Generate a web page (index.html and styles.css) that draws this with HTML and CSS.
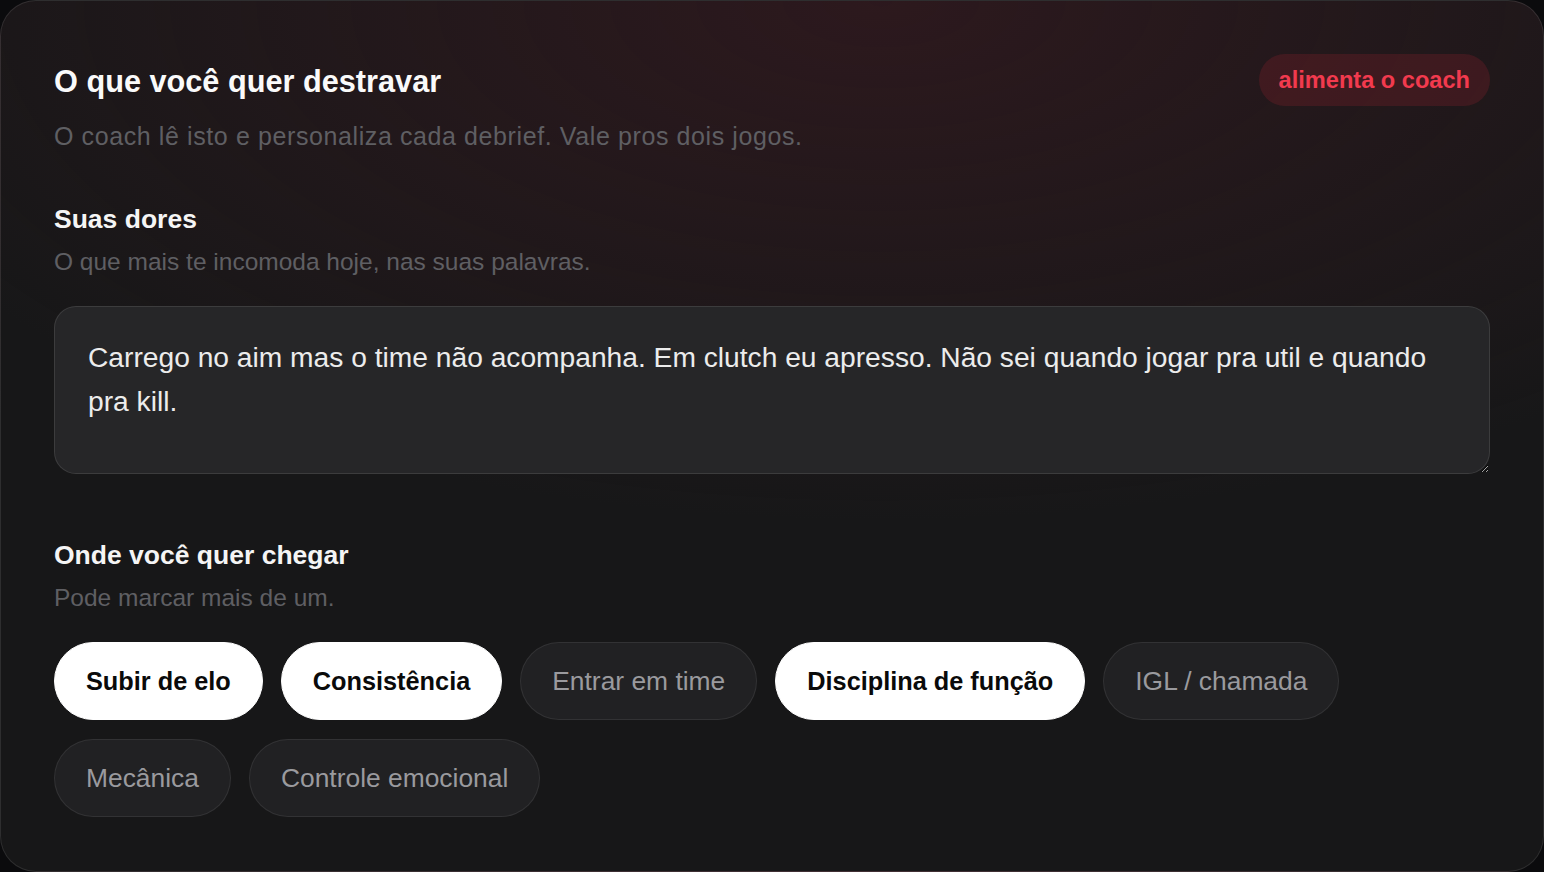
FILE: index.html
```html
<!DOCTYPE html>
<html lang="pt-BR">
<head>
    <meta charset="UTF-8">
    <meta name="viewport" content="width=device-width, initial-scale=1.0">
    <title>O que você quer destravar</title>
    <link rel="stylesheet" href="styles.css">
</head>
<body>
    <div class="card">
        <div class="card-header">
            <h1>O que você quer destravar</h1>
            <span class="badge">alimenta o coach</span>
        </div>
        <p class="subtitle">O coach lê isto e personaliza cada debrief. Vale pros dois jogos.</p>

        <div class="field">
            <h2>Suas dores</h2>
            <p class="hint">O que mais te incomoda hoje, nas suas palavras.</p>
            <textarea class="pains" rows="3">Carrego no aim mas o time não acompanha. Em clutch eu apresso. Não sei quando jogar pra util e quando pra kill.</textarea>
        </div>

        <div class="field goals">
            <h2>Onde você quer chegar</h2>
            <p class="hint">Pode marcar mais de um.</p>
            <div class="chips">
                <button type="button" class="chip active">Subir de elo</button>
                <button type="button" class="chip active">Consistência</button>
                <button type="button" class="chip">Entrar em time</button>
                <button type="button" class="chip active">Disciplina de função</button>
                <button type="button" class="chip">IGL / chamada</button>
                <button type="button" class="chip">Mecânica</button>
                <button type="button" class="chip">Controle emocional</button>
            </div>
        </div>
    </div>
</body>
</html>
```

FILE: styles.css
```css
body {
    font-family: "Liberation Sans", Arial, sans-serif;
    background-color: #0b0b0d;
    margin: 0;
    color: #fff;
}
.card {
    box-sizing: border-box;
    height: 872px;
    padding: 53px 53px;
    border: 1px solid rgba(255,255,255,0.1);
    border-radius: 36px;
    background:
        radial-gradient(ellipse 1100px 520px at 880px 0, rgba(62,26,34,0.55), rgba(62,26,34,0) 100%),
        #171718;
}
.card-header {
    display: flex;
    align-items: center;
    justify-content: space-between;
    height: 52px;
}
h1 {
    margin: 0;
    padding-top: 4px;
    font-size: 30.7px;
    font-weight: 700;
    color: #fafafa;
}
.badge {
    padding: 0 20px;
    line-height: 52px;
    border-radius: 26px;
    background: rgba(225,40,60,0.15);
    color: #f23a4e;
    font-size: 23.6px;
    font-weight: 700;
}
.subtitle {
    margin: 15px 0 0 0;
    font-size: 25px;
    letter-spacing: 0.6px;
    line-height: 31px;
    color: #5f5f63;
}
.field {
    margin-top: 52px;
}
h2 {
    margin: 0;
    font-size: 26.5px;
    line-height: 30px;
    font-weight: 700;
    color: #f5f5f5;
}
.hint {
    margin: 14px 0 0 0;
    font-size: 24.5px;
    line-height: 28px;
    color: #5f5f63;
}
.pains {
    display: block;
    box-sizing: border-box;
    width: 100%;
    height: 168px;
    margin-top: 30px;
    padding: 28px 33px;
    border: 1px solid rgba(255,255,255,0.1);
    border-radius: 22px;
    background: #262628;
    color: #ececec;
    font-family: inherit;
    font-size: 28.2px;
    line-height: 44px;
    outline: none;
}
.goals {
    margin-top: 66px;
}
.chips {
    display: flex;
    flex-wrap: wrap;
    gap: 19px 18px;
    margin-top: 30px;
}
.chip {
    height: 78px;
    padding: 0 31px;
    border: 1px solid rgba(255,255,255,0.08);
    border-radius: 39px;
    background: #212123;
    color: #9a9a9e;
    font-family: inherit;
    font-size: 26.4px;
    cursor: pointer;
}
.chip.active {
    background: #fff;
    border-color: #fff;
    color: #0a0a0a;
    font-size: 25.3px;
    font-weight: 700;
}
```
